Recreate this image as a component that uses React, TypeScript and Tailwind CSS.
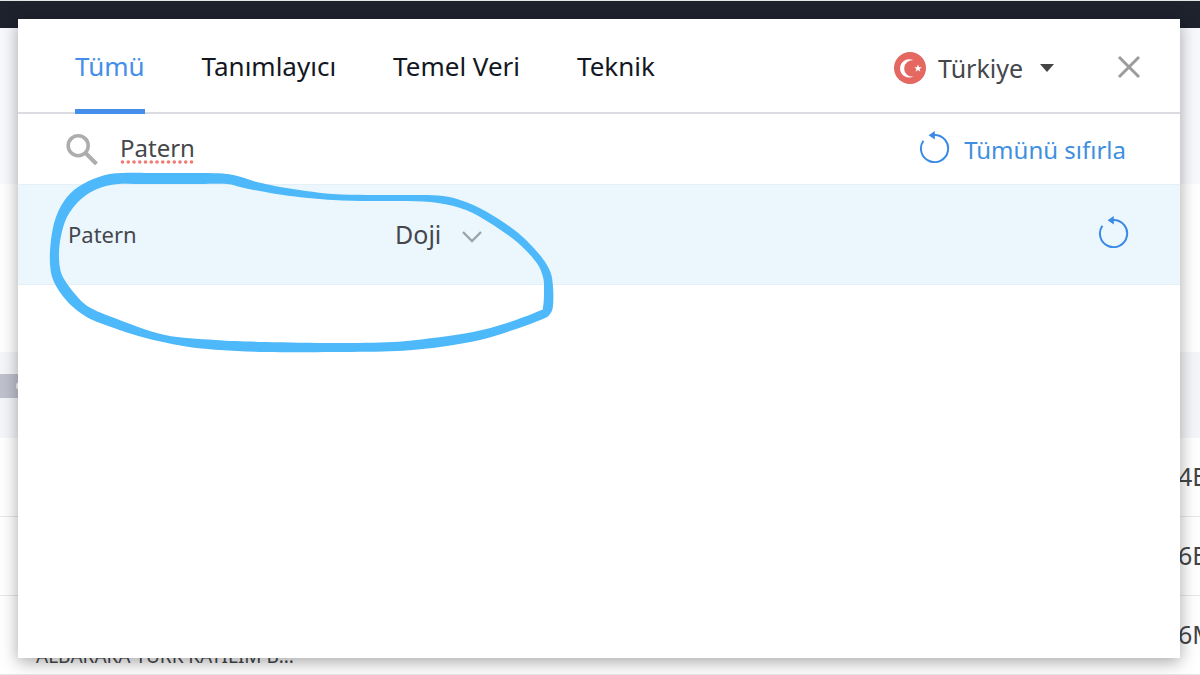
import { useState } from "react";

type Point = [number, number];

const outer: Point[] = [
  [123, 173], [150, 173], [180, 173], [208, 173], [227, 174], [241, 177], [257, 182], [280, 187], [306, 191],
  [333, 194], [367, 195], [400, 195], [422, 195], [443, 196], [463, 201], [487, 212], [517, 232], [539, 254],
  [550, 271], [553, 287], [553, 306], [550, 314], [543, 319], [513, 330], [480, 340], [440, 347], [397, 351],
  [335, 352], [267, 352], [220, 350], [183, 346], [142, 337], [100, 323], [82, 314], [66, 300], [54, 282],
  [50, 264], [51, 240], [56, 217], [67, 197], [83, 184], [105, 175],
];

const inner: Point[] = [
  [118, 184], [145, 184], [172, 184], [200, 184], [227, 184], [240, 187], [254, 190], [290, 196], [333, 200],
  [370, 201], [407, 201], [438, 203], [466, 210], [490, 223], [517, 242], [536, 262], [543, 277], [544, 291],
  [543, 307], [539, 311], [507, 323], [473, 332], [433, 338], [393, 342], [335, 343], [265, 342], [215, 340],
  [165, 335], [117, 319], [89, 307], [75, 294], [64, 279], [60, 268], [59, 253], [61, 236], [67, 217], [80, 200],
  [97, 189],
];

function smoothLoop(points: Point[]) {
  const n = points.length;
  let d = `M${points[0][0]} ${points[0][1]}`;
  for (let i = 0; i < n; i++) {
    const a = points[(i + n - 1) % n];
    const b = points[i];
    const c = points[(i + 1) % n];
    const e = points[(i + 2) % n];
    d += `C${b[0] + (c[0] - a[0]) / 6} ${b[1] + (c[1] - a[1]) / 6} ${c[0] - (e[0] - b[0]) / 6} ${c[1] - (e[1] - b[1]) / 6} ${c[0]} ${c[1]}`;
  }
  return d + "Z";
}

function ResetIcon() {
  return (
    <svg className="mb-1.5 size-8 shrink-0" viewBox="0 0 32 32" fill="none" aria-hidden="true">
      <path d="M4.4 9.7A13.6 13.6 0 1 0 15.5 3.9h-1" stroke="#3b8ae6" strokeWidth="2" />
      <path d="M9.6 4.2 15.8 0v8.4z" fill="#3b8ae6" />
    </svg>
  );
}

function TurkeyFlag() {
  return (
    <svg className="size-8 shrink-0" viewBox="0 0 32 32" aria-hidden="true">
      <circle cx="16" cy="16" r="16" fill="#e46762" />
      <path d="M19.6 8.3A9.2 9.2 0 1 0 19.6 24.5 8.2 8.2 0 1 1 19.6 8.3z" fill="#fff" />
      <path d="m24 12.6 1 2.6 2.8.1-2.2 1.7.8 2.7-2.4-1.6-2.4 1.6.8-2.7-2.2-1.7 2.8-.1z" fill="#fff" />
    </svg>
  );
}

function Backdrop() {
  const rows = [
    { value: "4B", name: "" },
    { value: "6B", name: "" },
    { value: "6M", name: "ALBARAKA TÜRK KATILIM B..." },
  ];
  return (
    <div className="min-h-screen bg-white" aria-hidden="true">
      <div className="h-7 border-t border-[#dfe9e6] bg-[#1e222d]" />
      <div className="h-39 bg-[#f8f9fd]" />
      <div className="h-42" />
      <div className="h-[86px] bg-[#f5f6f9] pt-[22px]">
        <div className="flex h-6 w-8 items-center justify-end bg-[#bfc1cd]">
          <span className="mr-2 size-2 rounded-full bg-white" />
        </div>
      </div>
      {rows.map((row) => (
        <div key={row.value} className="flex h-[79px] items-end justify-between border-b border-[#e6e7ec] pl-9">
          <span className="text-[19px] leading-9">{row.name}</span>
          <span className="flex w-[22px] items-center self-stretch text-[25px] whitespace-nowrap text-[#444]">
            {row.value}
          </span>
        </div>
      ))}
    </div>
  );
}

const tabs = ["Tümü", "Tanımlayıcı", "Temel Veri", "Teknik"];

export default function App() {
  const [active, setActive] = useState(tabs[0]);
  const [query, setQuery] = useState("Patern");

  return (
    <div className="relative h-screen overflow-hidden font-['Noto_Sans',sans-serif] text-[#45474c]">
      <Backdrop />
      <div
        role="dialog"
        aria-label="Filtreler"
        className="absolute top-[19px] right-5 bottom-[17px] left-[18px] flex flex-col bg-white shadow-[0_4px_16px_rgba(0,0,0,0.35)]"
      >
        <header className="flex h-[95px] items-stretch justify-between border-b-2 border-[#dadce1] pr-[39px] pl-[57px]">
          <div role="tablist" className="-mb-[2px] flex gap-[57px]">
            {tabs.map((tab) => (
              <button
                key={tab}
                type="button"
                role="tab"
                aria-selected={active === tab}
                onClick={() => setActive(tab)}
                className={
                  active === tab
                    ? "border-b-[5px] border-[#458eea] pt-1 text-[26px] text-[#458eea]"
                    : "border-b-[5px] border-transparent pt-1 text-[26px] text-[#131722]"
                }
              >
                {tab}
              </button>
            ))}
          </div>
          <div className="flex items-center pt-1">
            <label className="relative flex items-center gap-3 text-[25px]">
              <TurkeyFlag />
              <select aria-label="Ülke" className="w-[117px] appearance-none bg-transparent pt-0.5">
                <option>Türkiye</option>
              </select>
              <svg className="pointer-events-none absolute right-0 h-2 w-4" viewBox="0 0 16 8" aria-hidden="true">
                <path d="M1 0h14L8 8z" fill="#454545" />
              </svg>
            </label>
            <button type="button" aria-label="Kapat" className="mb-0.5 ml-[62px]">
              <svg className="size-6" viewBox="0 0 24 24" fill="none" aria-hidden="true">
                <path d="m2 2 20 20M22 2 2 22" stroke="#9c9c9c" strokeWidth="3" />
              </svg>
            </button>
          </div>
        </header>

        <div className="flex h-[70px] items-center pr-[54px] pl-12">
          <label htmlFor="search" aria-label="Ara">
            <svg className="size-8" viewBox="0 0 32 32" fill="none" aria-hidden="true">
              <circle cx="12.2" cy="12.7" r="10" stroke="#adadad" strokeWidth="3.6" />
              <path d="m19.5 20 11 11" stroke="#adadad" strokeWidth="4" />
            </svg>
          </label>
          <div className="relative ml-[22px] flex-1">
            <input
              id="search"
              value={query}
              spellCheck={false}
              onChange={(e) => setQuery(e.target.value)}
              className="w-full bg-transparent pb-0.5 text-[24px] outline-none"
            />
            <svg className="absolute bottom-1 left-0 h-1 w-[74px]" viewBox="0 0 74 4" aria-hidden="true">
              {Array.from({ length: 13 }, (_, i) => (
                <circle key={i} cx={2.5 + i * 5.75} cy="2" r="1.8" fill="#ee7a72" />
              ))}
            </svg>
          </div>
          <button type="button" className="flex items-center gap-[13px] pt-0.5 text-[24px] text-[#3f8fe0]">
            <ResetIcon />
            Tümünü sıfırla
          </button>
        </div>

        <div className="flex h-[101px] items-center border-y border-[#e4eff6] bg-[#ebf7fc] pr-[50px] pl-[50px]">
          <label htmlFor="pattern" className="w-[327px] text-[22px]">
            Patern
          </label>
          <div className="relative flex items-center">
            <select id="pattern" className="w-[87px] appearance-none bg-transparent text-[25px]">
              <option>Doji</option>
            </select>
            <svg
              className="pointer-events-none absolute right-0 mt-1 h-3 w-5"
              viewBox="0 0 20 12"
              fill="none"
              aria-hidden="true"
            >
              <path d="m1 1 9 9 9-9" stroke="#9ba4ab" strokeWidth="2.4" />
            </svg>
          </div>
          <button type="button" aria-label="Sıfırla" className="ml-auto">
            <ResetIcon />
          </button>
        </div>
      </div>

      <svg
        className="pointer-events-none absolute top-0 left-0 h-[360px] w-[560px]"
        viewBox="0 0 560 360"
        aria-hidden="true"
      >
        <path d={smoothLoop(outer) + smoothLoop(inner)} fill="#4db8fa" fillRule="evenodd" />
      </svg>
    </div>
  );
}
